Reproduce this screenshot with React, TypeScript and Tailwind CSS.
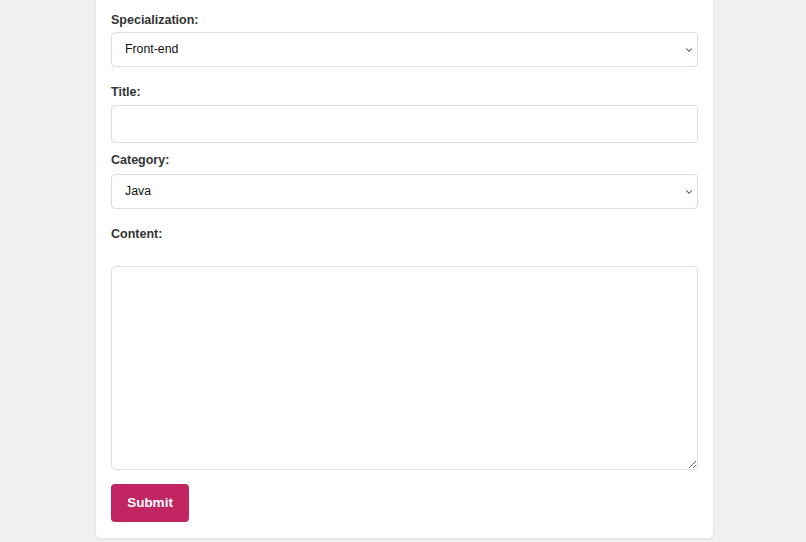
import { ChevronDown } from "lucide-react"

function Label({ children, className = "" }: { children: React.ReactNode; className?: string }) {
  return (
    <label className={`block text-[12.5px] font-bold leading-[15px] text-[#333] ${className}`}>
      {children}
    </label>
  )
}

function Select({ value, options }: { value: string; options: string[] }) {
  return (
    <div className="relative">
      <select
        defaultValue={value}
        className="block h-[35px] w-full appearance-none rounded-[4px] border border-[#ddd] bg-white pl-[13px] text-[12.3px] text-[#111] outline-none"
      >
        {options.map((o) => (
          <option key={o}>{o}</option>
        ))}
      </select>
      <ChevronDown
        className="pointer-events-none absolute right-[4px] top-1/2 h-[10px] w-[10px] -translate-y-1/2 text-[#444]"
        strokeWidth={2.5}
      />
    </div>
  )
}

export default function App() {
  return (
    <div
      className="min-h-[542px] w-full bg-[#f0f0f0] pl-[3px]"
      style={{ fontFamily: '"Liberation Sans", Arial, sans-serif' }}
    >
      <div className="mx-auto w-[617px] rounded-b-[5px] bg-white px-[15px] pb-[16px] pt-[13px] shadow-[0_1px_3px_rgba(0,0,0,0.08)]">
        <form onSubmit={(e) => e.preventDefault()}>
          {/* Specialization */}
          <Label>Specialization:</Label>
          <div className="mt-[4px]">
            <Select value="Front-end" options={["Front-end", "Back-end", "Full-stack"]} />
          </div>

          {/* Title */}
          <Label className="mt-[18px]">Title:</Label>
          <input
            type="text"
            className="mt-[5px] block h-[38px] w-full rounded-[4px] border border-[#ddd] bg-white px-[12px] text-[12px] outline-none"
          />

          {/* Category */}
          <Label className="mt-[10px]">Category:</Label>
          <div className="mt-[6px]">
            <Select value="Java" options={["Java", "JavaScript", "Python"]} />
          </div>

          {/* Content */}
          <Label className="mt-[18px]">Content:</Label>
          <textarea className="mt-[24px] block h-[204px] w-full rounded-[4px] border border-[#ddd] bg-white p-[10px] text-[12px] outline-none" />

          <button
            type="submit"
            className="mt-[14px] h-[38px] w-[78px] rounded-[4px] bg-[#c22662] text-[13.5px] font-bold text-white"
          >
            Submit
          </button>
        </form>
      </div>
    </div>
  )
}
